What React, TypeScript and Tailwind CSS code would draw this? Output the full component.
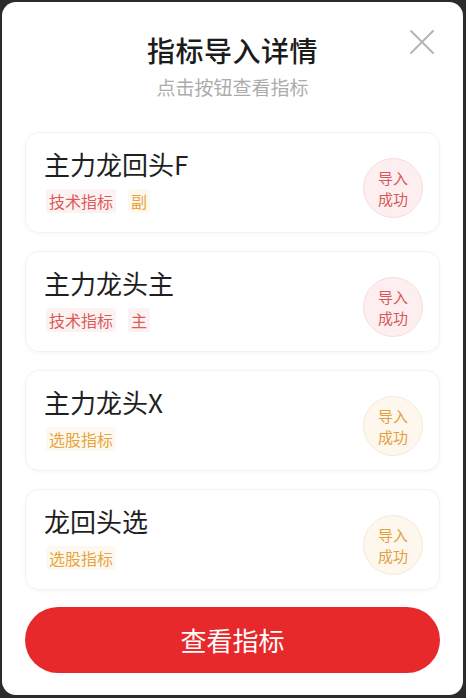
import React from "react";

type Tag = { text: string; tone: "red" | "orange" };
type Item = { name: string; tags: Tag[]; tone: "red" | "orange" };

const items: Item[] = [
  { name: "主力龙回头F", tags: [{ text: "技术指标", tone: "red" }, { text: "副", tone: "orange" }], tone: "red" },
  { name: "主力龙头主", tags: [{ text: "技术指标", tone: "red" }, { text: "主", tone: "red" }], tone: "red" },
  { name: "主力龙头X", tags: [{ text: "选股指标", tone: "orange" }], tone: "orange" },
  { name: "龙回头选", tags: [{ text: "选股指标", tone: "orange" }], tone: "orange" },
];

function TagChip({ tag }: { tag: Tag }) {
  const cls =
    tag.tone === "red"
      ? "bg-[#fdf2f2] text-[#de5a5a]"
      : "bg-[#fdf9f0] text-[#e8a43c]";
  return (
    <span className={`h-[24px] px-[3px] rounded-[3px] text-[16px] leading-[24px] ${cls}`}>
      {tag.text}
    </span>
  );
}

function Badge({ tone }: { tone: "red" | "orange" }) {
  const cls =
    tone === "red"
      ? "bg-[#fdeff0] border-[#f7dcdd] text-[#d8575a]"
      : "bg-[#fdf7ee] border-[#f6e9d6] text-[#e3a040]";
  return (
    <div
      className={`w-[60px] h-[60px] rounded-full border flex flex-col items-center justify-center text-[15px] leading-[21px] ${cls}`}
    >
      <span>导入</span>
      <span>成功</span>
    </div>
  );
}

export default function App() {
  return (
    <div
      className="w-[466px] h-[698px] bg-[#2b2b2b] p-[2px] pr-[3px] pb-[3px]"
      style={{ fontFamily: '"Noto Sans CJK SC", "Noto Sans", sans-serif' }}
    >
      <div className="relative w-full h-full bg-white rounded-[14px] flex flex-col items-center pt-[30px] px-[23px]">
        <button className="absolute top-[26px] right-[27px] w-[28px] h-[28px] flex items-center justify-center">
          <svg width="26" height="26" viewBox="0 0 26 26" fill="none">
            <path d="M2 2 L24 24 M24 2 L2 24" stroke="#b5b5b5" strokeWidth="2" strokeLinecap="round" />
          </svg>
        </button>
        <div className="text-[28px] leading-[36px] font-medium text-[#1c1c1c] tracking-[0.5px]">
          指标导入详情
        </div>
        <div className="mt-[7px] text-[19px] leading-[24px] text-[#acacac]">点击按钮查看指标</div>
        <div className="mt-[33px] w-full flex flex-col gap-[18px]">
          {items.map((it) => (
            <div
              key={it.name}
              className="h-[101px] rounded-[14px] border border-[#f2f2f2] shadow-[0_1px_4px_rgba(0,0,0,0.04)] flex items-center justify-between pl-[18px] pr-[16px]"
            >
              <div className="flex flex-col self-start mt-[15px]">
                <div className="text-[26px] leading-[32px] text-[#1f1f1f]">{it.name}</div>
                <div className="mt-[9px] flex gap-[12px] ml-[2px]">
                  {it.tags.map((t) => (
                    <TagChip key={t.text} tag={t} />
                  ))}
                </div>
              </div>
              <div className="mt-[10px]">
                <Badge tone={it.tone} />
              </div>
            </div>
          ))}
        </div>
        <button className="mt-[17px] w-full h-[66px] rounded-full bg-[#e8292c] text-white text-[26px] leading-[66px]">
          查看指标
        </button>
      </div>
    </div>
  );
}
